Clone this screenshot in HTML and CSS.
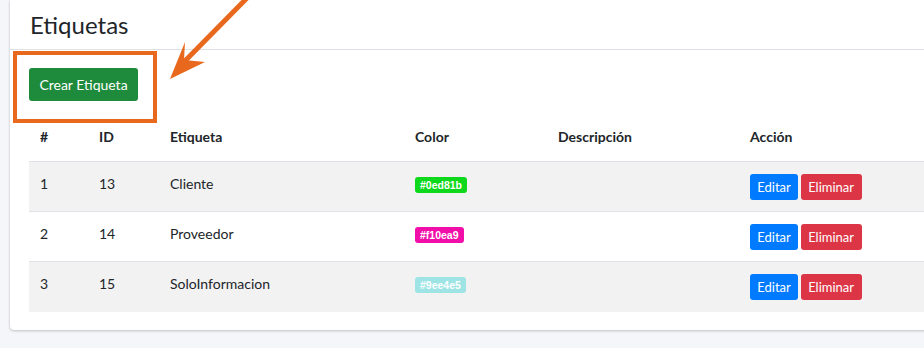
FILE: index.html
```html
<!DOCTYPE html>
<html lang="es">

<head>
    <meta charset="UTF-8">
    <title>Etiquetas</title>
    <link rel="stylesheet" href="styles.css">
</head>

<body>
    <div class="card">
        <div class="card-header">
            <h3 class="card-title">Etiquetas</h3>
        </div>
        <div class="card-body">
            <button class="btn btn-success" type="button">Crear Etiqueta</button>
            <table class="table">
                <thead>
                    <tr>
                        <th class="col-num">#</th>
                        <th class="col-id">ID</th>
                        <th class="col-name">Etiqueta</th>
                        <th class="col-color">Color</th>
                        <th class="col-desc">Descripción</th>
                        <th>Acción</th>
                    </tr>
                </thead>
                <tbody>
                    <tr>
                        <td>1</td>
                        <td>13</td>
                        <td>Cliente</td>
                        <td><span class="badge" style="background:#0ed81b">#0ed81b</span></td>
                        <td></td>
                        <td><button class="btn btn-sm btn-primary">Editar</button> <button class="btn btn-sm btn-danger">Eliminar</button></td>
                    </tr>
                    <tr>
                        <td>2</td>
                        <td>14</td>
                        <td>Proveedor</td>
                        <td><span class="badge" style="background:#f10ea9">#f10ea9</span></td>
                        <td></td>
                        <td><button class="btn btn-sm btn-primary">Editar</button> <button class="btn btn-sm btn-danger">Eliminar</button></td>
                    </tr>
                    <tr>
                        <td>3</td>
                        <td>15</td>
                        <td>SoloInformacion</td>
                        <td><span class="badge" style="background:#9ee4e5">#9ee4e5</span></td>
                        <td></td>
                        <td><button class="btn btn-sm btn-primary">Editar</button> <button class="btn btn-sm btn-danger">Eliminar</button></td>
                    </tr>
                </tbody>
            </table>
        </div>
    </div>

    <!-- anotacion de la captura -->
    <div class="highlight"></div>
    <svg class="arrow" width="100" height="90" viewBox="160 0 100 90">
        <line x1="248" y1="-3" x2="182" y2="64" stroke="#e8681d" stroke-width="5" />
        <polygon points="170,79 185,42 184,60 205,62" fill="#e8681d" />
    </svg>
</body>

</html>
```

FILE: styles.css
```css
body {
    font-family: 'Lato', 'Open Sans', Arial, sans-serif;
    background: #f4f6f9;
    color: #212529;
    margin: 0;
    padding: 0 0 17px 10px;
    overflow: hidden;
}

.card {
    width: 940px;
    background: #fff;
    border-radius: 0 0 4px 4px;
    box-shadow: 0 0 1px rgba(0, 0, 0, 0.18), 0 1px 3px rgba(0, 0, 0, 0.2);
}

.card-header {
    height: 50px;
    border-bottom: 1px solid #dee2e6;
    box-sizing: border-box;
    padding: 8px 20px 0 20px;
}

.card-title {
    margin: 0;
    font-size: 24px;
    font-weight: 400;
    line-height: 34px;
}

.card-body {
    padding: 18px 19px 18px 19px;
}

.btn {
    font-family: inherit;
    border: none;
    color: #fff;
    cursor: pointer;
    border-radius: 3px;
    white-space: nowrap;
    padding: 0;
    vertical-align: top;
}

.btn-success {
    background: #1e8a3b;
    font-size: 14px;
    height: 33px;
    width: 109px;
}

.btn-sm {
    font-size: 13px;
    height: 26px;
}

.btn-primary {
    background: #007bff;
    width: 48px;
}

.btn-danger {
    background: #dc3545;
    width: 61px;
    margin-left: -1px;
}

.table {
    margin-top: 20px;
    width: 920px;
    border-collapse: collapse;
    font-size: 14px;
}

.table th {
    text-align: left;
    font-weight: 700;
    padding: 6px 11px 14px 11px;
    line-height: 20px;
    vertical-align: top;
}

.table tbody tr {
    height: 50px;
}

.table td {
    padding: 12px 11px 0 11px;
    line-height: 20px;
    vertical-align: top;
    border-top: 1px solid #dee2e6;
}

.table tbody tr:nth-child(odd) {
    background: #f2f2f2;
}

.col-num { width: 37px; }
.col-id { width: 49px; }
.col-name { width: 223px; }
.col-color { width: 121px; }
.col-desc { width: 170px; }

.badge {
    display: inline-block;
    margin-top: 2px;
    color: #fff;
    font-family: 'Liberation Sans', Arial, sans-serif;
    font-size: 10.5px;
    font-weight: 700;
    padding: 2px 5px;
    border-radius: 3px;
    line-height: 12px;
}

.highlight {
    position: absolute;
    left: 13px;
    top: 51px;
    width: 136px;
    height: 64px;
    border: 4px solid #e8681d;
}

.arrow {
    position: absolute;
    left: 160px;
    top: 0;
}
```
